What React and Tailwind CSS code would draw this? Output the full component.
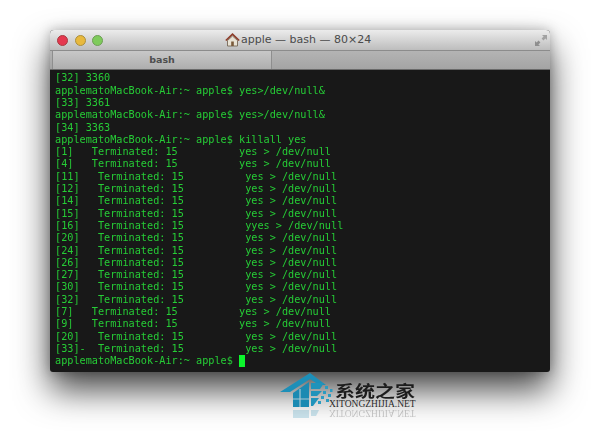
const lines = [
  '[32] 3360',
  'applematoMacBook-Air:~ apple$ yes>/dev/null&',
  '[33] 3361',
  'applematoMacBook-Air:~ apple$ yes>/dev/null&',
  '[34] 3363',
  'applematoMacBook-Air:~ apple$ killall yes',
  '[1]   Terminated: 15          yes > /dev/null',
  '[4]   Terminated: 15          yes > /dev/null',
  '[11]   Terminated: 15          yes > /dev/null',
  '[12]   Terminated: 15          yes > /dev/null',
  '[14]   Terminated: 15          yes > /dev/null',
  '[15]   Terminated: 15          yes > /dev/null',
  '[16]   Terminated: 15          yyes > /dev/null',
  '[20]   Terminated: 15          yes > /dev/null',
  '[24]   Terminated: 15          yes > /dev/null',
  '[26]   Terminated: 15          yes > /dev/null',
  '[27]   Terminated: 15          yes > /dev/null',
  '[30]   Terminated: 15          yes > /dev/null',
  '[32]   Terminated: 15          yes > /dev/null',
  '[7]   Terminated: 15          yes > /dev/null',
  '[9]   Terminated: 15          yes > /dev/null',
  '[20]   Terminated: 15          yes > /dev/null',
  '[33]-  Terminated: 15          yes > /dev/null',
];

function HouseIcon() {
  return (
    <svg width="15" height="14" viewBox="0 0 15 14">
      <path d="M2.5 7.5V13H12.5V7.5L7.5 3Z" fill="#e8e2d4" stroke="#6b5a48" strokeWidth="0.8" />
      <path d="M0.8 7.5L7.5 1.2L14.2 7.5" fill="none" stroke="#8c3b28" strokeWidth="1.6" />
      <rect x="6.2" y="8.5" width="2.6" height="4.5" fill="#7a5a3a" />
    </svg>
  );
}

function ResizeIcon() {
  return (
    <svg width="14" height="13" viewBox="0 0 14 13">
      <path d="M8 1H13V6L11.4 4.4L9.4 6.4L7.6 4.6L9.6 2.6Z" fill="#a2a2a2" />
      <path d="M1 7V12H6L4.4 10.4L6.4 8.4L4.6 6.6L2.6 8.6Z" fill="#8e8e8e" />
    </svg>
  );
}

function Logo() {
  return (
    <div className="absolute left-[280px] top-[373px] w-[160px] h-[62px]">
      <svg className="absolute left-0 top-0" width="54" height="50" viewBox="0 0 54 50">
        <path d="M0 19L30 0L46 12H39L30 6L10 19Z" fill="#1d8fb8" />
        <path d="M13 20L29 9V34H13Z" fill="#1b8ab2" />
        <path d="M13 26H29M20 16V34" stroke="#a9c6d2" strokeWidth="1.2" />
        <path d="M31 10H44L40 16H31ZM31 18H42L37 23H31ZM31 25H39L33 33H31Z" fill="#1f93bb" />
        <path d="M45 13h3v3h-3zM50 16h2.5v3h-2.5zM43 18h3v3h-3zM48 21h3v3h-3zM41 23h3v3h-3zM46 26h3v3h-3zM38 28h3v3h-3z" fill="#2b9cc2" />
        <path d="M13 37H29V45H13ZM31 37H39L36 43H31Z" fill="#1b8ab2" opacity="0.22" />
      </svg>
      <div className="absolute left-[55px] top-[10px] text-[#1c1c1c] text-[20px] leading-[16px] font-bold whitespace-nowrap scale-y-[0.8] font-['Noto_Sans_CJK_SC',sans-serif]">系统之家</div>
      <div className="absolute left-[49px] top-[27px] text-[#2a2a2a] text-[9.5px] leading-[8px] whitespace-nowrap font-['Liberation_Serif',serif]">XITONGZHIJIA.NET</div>
      <div className="absolute left-[49px] top-[36px] text-[#2a2a2a] opacity-25 text-[9.5px] leading-[8px] whitespace-nowrap -scale-y-100 font-['Liberation_Serif',serif]">XITONGZHIJIA.NET</div>
    </div>
  );
}

export default function App() {
  return (
    <div className="relative w-[600px] h-[441px] overflow-hidden bg-white pt-[30px] pl-[50px]">
      <div className="w-[500px] h-[342px] flex flex-col rounded-t-[4px] rounded-b-[3px] bg-[#181818] shadow-[0_18px_34px_rgba(0,0,0,0.72),0_0_12px_rgba(0,0,0,0.25)]">
        <div className="h-[21px] flex items-center rounded-t-[4px] border-b border-[#8c8c8c] bg-gradient-to-b from-[#ececec] to-[#bdbdbd]">
          <div className="flex gap-[6.5px] pl-[7px]">
            <span className="w-[11px] h-[11px] rounded-full bg-[#e5384f] border border-[#a83a40]" />
            <span className="w-[11px] h-[11px] rounded-full bg-[#e8b93e] border border-[#ac8f3c]" />
            <span className="w-[11px] h-[11px] rounded-full bg-[#7fcb5c] border border-[#6d9e55]" />
          </div>
          <div className="ml-[122px] flex items-center gap-[1px]">
            <HouseIcon />
            <span className="text-[#4a4a4a] text-[11px] leading-[14px] whitespace-nowrap font-['DejaVu_Sans',sans-serif]">apple — bash — 80×24</span>
          </div>
          <div className="ml-auto pr-[2px] flex">
            <ResizeIcon />
          </div>
        </div>
        <div className="h-[19px] flex border-b border-[#6a6a6a] bg-gradient-to-b from-[#b4b4b4] to-[#a4a4a4]">
          <div className="w-[220px] ml-[2px] flex items-center justify-center border-x border-[#8e8e8e] bg-gradient-to-b from-[#c8c8c8] to-[#aeaeae]">
            <span className="text-[#4e4e4e] text-[9.5px] font-bold whitespace-nowrap font-['DejaVu_Sans',sans-serif]">bash</span>
          </div>
        </div>
        <div className="flex-1 pl-[5px] pt-[2.4px] text-[#26cc36] text-[10.2px] leading-[12.3px] font-['DejaVu_Sans_Mono',monospace] blur-[0.25px]">
          {lines.map((line, i) => (
            <div key={i} className="h-[12.3px] whitespace-pre">{line}</div>
          ))}
          <div className="h-[12.3px] flex whitespace-pre">
            <span>applematoMacBook-Air:~ apple$ </span>
            <span className="w-[6px] h-[12px] bg-[#0cf52c]" />
          </div>
        </div>
      </div>
      <Logo />
    </div>
  );
}
